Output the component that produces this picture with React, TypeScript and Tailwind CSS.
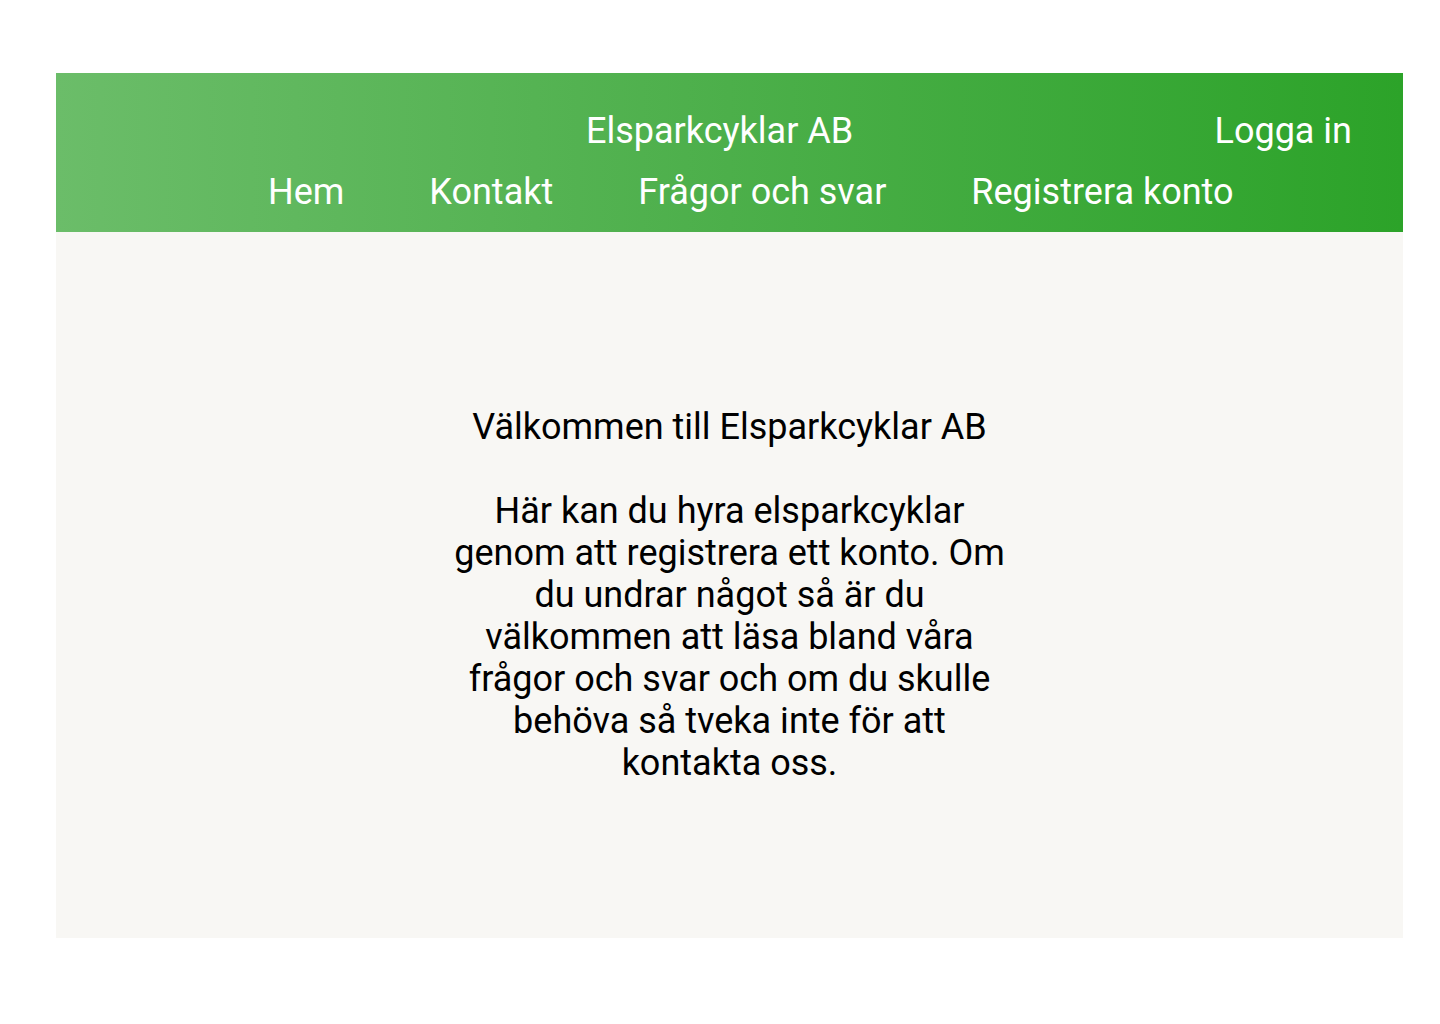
export default function App() {
  return (
    <div className="min-h-screen bg-white pt-[73px]" style={{ fontFamily: 'Roboto, "Liberation Sans", sans-serif' }}>
      <div className="ml-[56px] w-[1347px]">
        <header className="bg-[linear-gradient(to_right,#6bbd69,#4caf4a_50%,#2ca329)] pt-[37px] pb-[19px] text-white text-[36px] leading-[42px]">
          <div className="flex items-center pl-[530px] pr-[51px]">
            <span>Elsparkcyklar AB</span>
            <div className="flex-1" />
            <a href="#">Logga in</a>
          </div>
          <nav className="mt-[19px] flex gap-[85px] pl-[212px]">
            <a href="#">Hem</a>
            <a href="#">Kontakt</a>
            <a href="#">Frågor och svar</a>
            <a href="#">Registrera konto</a>
          </nav>
        </header>
        <main className="h-[706px] bg-[#f8f7f4] pt-[174px] flex justify-center">
          <div className="w-[560px] text-center text-black text-[36px] leading-[42px]">
            <p>Välkommen till Elsparkcyklar AB</p>
            <p className="mt-[42px]">
              Här kan du hyra elsparkcyklar genom att registrera ett konto. Om du undrar något så är du välkommen att läsa bland våra frågor och svar och om du skulle behöva så tveka inte för att kontakta oss.
            </p>
          </div>
        </main>
      </div>
    </div>
  );
}
